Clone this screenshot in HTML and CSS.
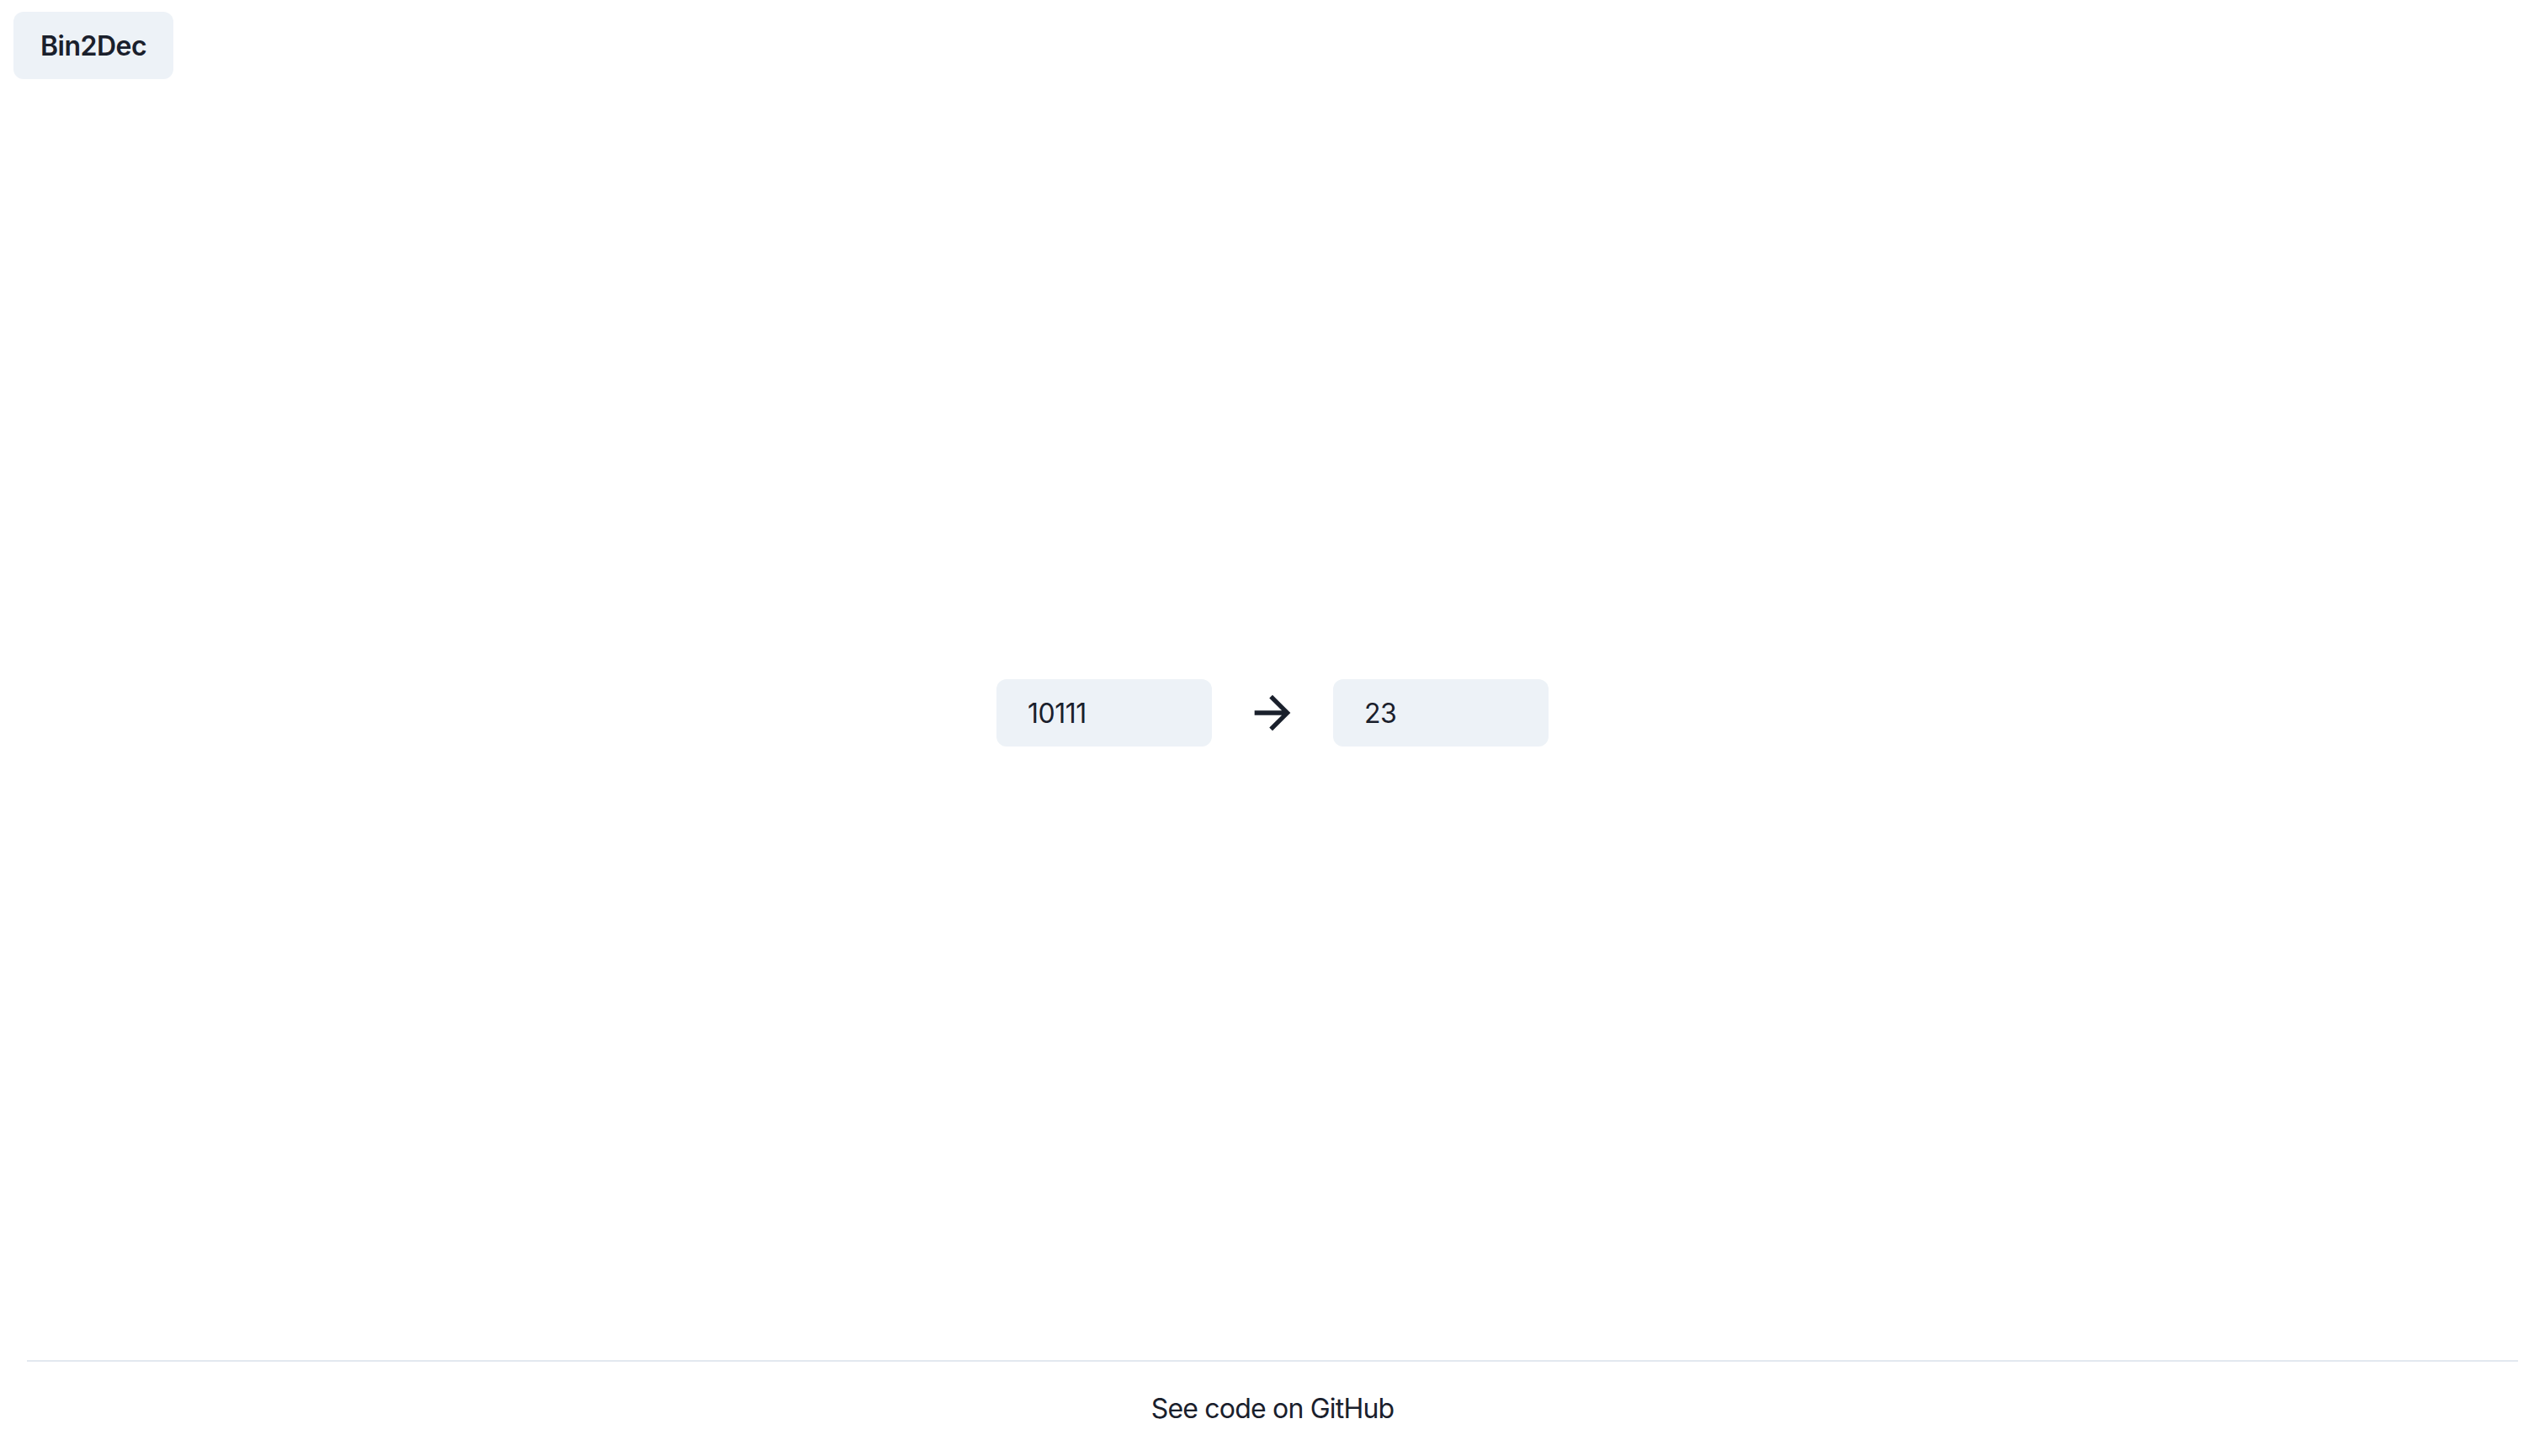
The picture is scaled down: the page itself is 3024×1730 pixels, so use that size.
FILE: index.html
```html
<!DOCTYPE html>
<html lang="en">
<head>
<meta charset="utf-8">
<title>Bin2Dec</title>
<link rel="stylesheet" href="styles.css">
</head>
<body>
<div class="page">
  <header class="header">
    <button class="brand" type="button">Bin2Dec</button>
  </header>
  <main class="main">
    <div class="converter">
      <input class="field" type="text" value="10111">
      <svg class="arrow" viewBox="0 0 24 24" aria-hidden="true"><path d="M12 4l-1.41 1.41L16.17 11H4v2h12.17l-5.58 5.59L12 20l8-8z"/></svg>
      <input class="field" type="text" value="23" readonly>
    </div>
  </main>
  <footer class="footer">
    <div class="footer-inner">See code on GitHub</div>
  </footer>
</div>
</body>
</html>
```

FILE: styles.css
```css
html, body {
  margin: 0;
  padding: 0;
  background: #ffffff;
}
body {
  font-family: Inter, "Noto Sans", "Liberation Sans", sans-serif;
  color: #1a202c;
}
.page {
  min-height: 100vh;
  display: flex;
  flex-direction: column;
}
.header {
  padding: 14px 16px 0;
  display: flex;
}
.brand {
  height: 80px;
  padding: 0 32px;
  border: none;
  border-radius: 12px;
  background: #edf2f7;
  color: #1a202c;
  font-family: inherit;
  font-size: 32px;
  font-weight: 600;
  letter-spacing: -0.5px;
  line-height: 1.2;
  padding-top: 2px;
  cursor: pointer;
}
.main {
  flex: 1;
  display: flex;
  align-items: center;
  justify-content: center;
  padding-bottom: 16px;
}
.converter {
  display: flex;
  align-items: center;
  gap: 40px;
}
.field {
  box-sizing: border-box;
  width: 256px;
  height: 80px;
  padding: 0 32px 0 37px;
  border: none;
  border-radius: 12px;
  background: #edf2f7;
  color: #1a202c;
  font-family: inherit;
  font-size: 32px;
  letter-spacing: -0.5px;
  outline: none;
}
.arrow {
  width: 64px;
  height: 64px;
  fill: #1a202c;
  flex-shrink: 0;
}
.footer {
  padding: 0 32px;
}
.footer-inner {
  border-top: 2px solid #e2e8f0;
  padding: 32px;
  text-align: center;
  font-size: 32px;
  line-height: 48px;
  letter-spacing: -0.8px;
}
```
